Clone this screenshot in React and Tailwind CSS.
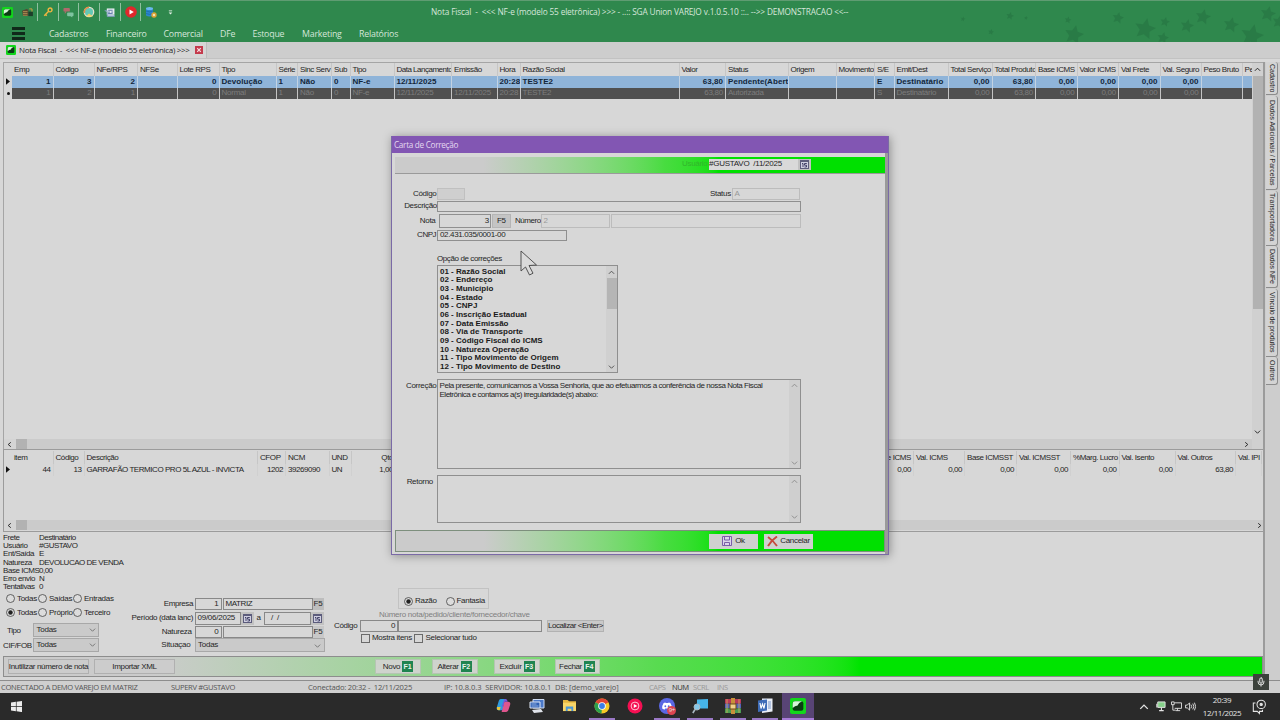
import clsx from "clsx";
import { Mic } from "lucide-react";

const menu = [
  { label: "Cadastros", width: "w-[57px]" },
  { label: "Financeiro", width: "w-[57.500px]" },
  { label: "Comercial", width: "w-[56.500px]" },
  { label: "DFe", width: "w-[32.5px]" },
  { label: "Estoque", width: "w-[49.5px]" },
  { label: "Marketing", width: "w-[57px]" },
  { label: "Relatórios", width: "w-[57px]" },
];

const notas = [
  { title: "Emp", w: "w-[41.5px]", a: "1", b: "1", right: true },
  { title: "Código", w: "w-[41px]", a: "3", b: "2", right: true },
  { title: "NFe/RPS", w: "w-[43.5px]", a: "2", b: "1", right: true },
  { title: "NFSe", w: "w-[39.5px]", a: "", b: "" },
  { title: "Lote RPS", w: "w-[42px]", a: "0", b: "0", right: true },
  { title: "Tipo", w: "w-[57px]", a: "Devolução", b: "Normal" },
  { title: "Série", w: "w-[21.5px]", a: "1", b: "1" },
  { title: "Sinc Serv", w: "w-[34px]", a: "Não", b: "Não" },
  { title: "Sub", w: "w-[18.5px]", a: "0", b: "0" },
  { title: "Tipo", w: "w-[44px]", a: "NF-e", b: "NF-e" },
  { title: "Data Lançamento", w: "w-[57.5px]", a: "12/11/2025", b: "12/11/2025", wide: true },
  { title: "Emissão", w: "w-[45.5px]", a: "", b: "12/11/2025" },
  { title: "Hora", w: "w-[23px]", a: "20:28", b: "20:28" },
  { title: "Razão Social", w: "w-[159px]", a: "TESTE2", b: "TESTE2" },
  { title: "Valor", w: "w-[46.5px]", a: "63,80", b: "63,80", right: true },
  { title: "Status", w: "w-[62.5px]", a: "Pendente(Aberto)", b: "Autorizada" },
  { title: "Origem", w: "w-[48px]", a: "", b: "" },
  { title: "Movimento", w: "w-[38.5px]", a: "", b: "" },
  { title: "S/E", w: "w-[19.5px]", a: "E", b: "S" },
  { title: "Emit/Dest", w: "w-[54px]", a: "Destinatário", b: "Destinatário" },
  { title: "Total Serviço", w: "w-[44px]", a: "0,00", b: "0,00", right: true },
  { title: "Total Produto", w: "w-[43.5px]", a: "63,80", b: "63,80", right: true },
  { title: "Base ICMS", w: "w-[41.5px]", a: "0,00", b: "0,00", right: true },
  { title: "Valor ICMS", w: "w-[41.5px]", a: "0,00", b: "0,00", right: true },
  { title: "Val Frete", w: "w-[41.5px]", a: "0,00", b: "0,00", right: true },
  { title: "Val. Seguro", w: "w-[41px]", a: "0,00", b: "0,00", right: true },
  { title: "Peso Bruto", w: "w-[41px]", a: "", b: "" },
  { title: "Pe", w: "w-[11.5px]", a: "", b: "" },
];

const itens = [
  { title: "item", w: "w-[41.5px]", a: "44", right: true },
  { title: "Código", w: "w-[31px]", a: "13", right: true },
  { title: "Descrição", w: "w-[173.5px]", a: "GARRAFÃO TERMICO PRO 5L AZUL - INVICTA" },
  { title: "CFOP", w: "w-[28px]", a: "1202", right: true },
  { title: "NCM", w: "w-[43.5px]", a: "39269090" },
  { title: "UND", w: "w-[22.5px]", a: "UN" },
  { title: "Qtd", w: "w-[44px]", a: "1,00", right: true, titleRight: true },
  { title: "", w: "w-[468px]", a: "" },
  { title: "Base ICMS", w: "w-[50px]", a: "0,00", right: true, titleRight: true },
  { title: "Val. ICMS", w: "w-[51px]", a: "0,00", right: true },
  { title: "Base ICMSST", w: "w-[52px]", a: "0,00", right: true },
  { title: "Val. ICMSST", w: "w-[54px]", a: "0,00", right: true },
  { title: "%Marg. Lucro", w: "w-[48.5px]", a: "0,00", right: true },
  { title: "Val. Isento", w: "w-[56px]", a: "0,00", right: true },
  { title: "Val. Outros", w: "w-[60.5px]", a: "63,80", right: true },
  { title: "Val. IPI", w: "w-[26px]", a: "" },
];

const sideTabs = [
  { label: "Cadastro", h: "h-[33px]", track: "tracking-[0px]" },
  { label: "Dados Adicionais / Parcelas", h: "h-[94.500px]", track: "tracking-[-0.05px]" },
  { label: "Transportadora", h: "h-[55px]", track: "tracking-[0.05px]" },
  { label: "Dados NFe", h: "h-[42px]", track: "tracking-[-0.05px]" },
  { label: "Vínculo de produtos", h: "h-[68px]", track: "tracking-[-0.1px]" },
  { label: "Outros", h: "h-[28px]", track: "tracking-[-0.05px]" },
];

const infos = [
  ["Frete", "Destinatário"],
  ["Usuário", "#GUSTAVO"],
  ["Ent/Saída", "E"],
  ["Natureza", "DEVOLUCAO DE VENDA"],
  ["Base ICMS", "0,00"],
  ["Erro envio", "N"],
  ["Tentativas", "0"],
];

const correcoes = [
  "01 - Razão Social",
  "02 - Endereço",
  "03 - Município",
  "04 - Estado",
  "05 - CNPJ",
  "06 - Inscrição Estadual",
  "07 - Data Emissão",
  "08 - Via de Transporte",
  "09 - Código Fiscal do ICMS",
  "10 - Natureza Operação",
  "11 - Tipo Movimento de Origem",
  "12 - Tipo Movimento de Destino",
];

const stars = [
  [963, 18, 2.5], [1010, 15, 4], [1026, 17, 2], [991, 31, 3], [1068, 19, 3.5],
  [1074, 34, 10], [1118, 17, 6], [1145, 28, 11], [1165, 21, 5], [1163, 37, 6],
  [1187, 25, 7], [1203, 16, 8], [1231, 24, 8], [1252, 35, 12], [1268, 13, 8],
  [1279, 21, 7],
];

function starPoints(cx, cy, r) {
  return Array.from({ length: 10 }, (_, i) => {
    const radius = i % 2 ? r * 0.48 : r;
    const angle = (Math.PI / 5) * i - 1.35;
    return `${cx + radius * Math.cos(angle)},${cy + radius * Math.sin(angle)}`;
  }).join(" ");
}

function Chevron({ dir = "down", className }) {
  const d = {
    down: "M1 3l3 3 3-3",
    up: "M1 5.500l3-3 3 3",
    left: "M5.500 1.500l-3 2.500 3 2.500",
    right: "M2.500 1.500l3 2.500-3 2.500",
  }[dir];
  return (
    <svg viewBox="0 0 8 8" className={clsx("shrink-0", className)} fill="none" stroke="currentColor" strokeWidth="1.1">
      <path d={d} />
    </svg>
  );
}

function AppLogo({ className }) {
  return (
    <svg viewBox="0 0 12 12" className={clsx("shrink-0", className)}>
      <rect width="12" height="12" rx="1.500" fill="#12d61c" />
      <rect x="2" y="2.500" width="8" height="7" rx="1.500" fill="#0c3b14" />
      <path d="M2 7.500V4.200Q2 2.500 3.700 2.500H9Q6.500 3.500 5.500 5.800 4.300 5.500 2 7.500z" fill="#d6f5d8" />
    </svg>
  );
}

function Calendar() {
  return (
    <span className="flex w-[13px] shrink-0 items-center justify-center bg-[#c2c2c2]">
      <svg viewBox="0 0 9 9" className="size-[9px]">
        <rect x="0.500" y="0.500" width="8" height="8" fill="#cfcfe0" stroke="#5c5c7c" />
        <path d="M0.500 1.500h8" stroke="#5c5c7c" />
        <path d="M2 3.500h1v3.500M4.500 7h2V5.200h-2V3.500h2.300" fill="none" stroke="#33335c" strokeWidth="0.900" />
      </svg>
    </span>
  );
}

function Radio({ label, checked, className }) {
  return (
    <span className={clsx("flex shrink-0 items-center gap-[2px]", className)}>
      <svg viewBox="0 0 9 9" className="size-[9px] shrink-0">
        <circle cx="4.500" cy="4.500" r="4" fill="#dcdcdc" stroke="#444" strokeWidth="0.800" />
        {checked && <circle cx="4.500" cy="4.500" r="2.200" fill="#222" />}
      </svg>
      <span className="tracking-[-0.3px]">{label}</span>
    </span>
  );
}

function Check({ label, className }) {
  return (
    <span className={clsx("flex shrink-0 items-center gap-[2.5px]", className)}>
      <span className="size-[9px] shrink-0 border border-[#6a6a6a]" />
      <span className="tracking-[-0.3px]">{label}</span>
    </span>
  );
}

function Select({ value, className }) {
  return (
    <span className={clsx("flex h-[14px] items-center justify-between border border-[#a8a8a8] bg-[#cacaca] px-[2.5px] tracking-[-0.25px]", className)}>
      {value}
      <Chevron className="size-[7px] text-[#777]" />
    </span>
  );
}

function Field({ className, children }) {
  return (
    <span className={clsx("flex shrink-0 items-center overflow-hidden border px-[2px]", className)}>{children}</span>
  );
}

function GridHeader({ cols }) {
  return (
    <div className="flex h-[13px] shrink-0 pl-[8px] tracking-[-0.42px]">
      {cols.map((c, i) => (
        <div
          key={i}
          className={clsx(
            "flex shrink-0 items-center overflow-hidden border-r border-[#c6c6c6] pl-[2px]",
            c.w,
            c.titleRight && "justify-end pr-[2px]"
          )}
        >
          <span className={clsx(c.wide && "tracking-[-0.5px]")}>{c.title}</span>
        </div>
      ))}
    </div>
  );
}

function GridRow({ cols, field, mark, className, cell }) {
  return (
    <div className="flex h-[11.6px] shrink-0">
      <div className="flex w-[8px] shrink-0 items-center justify-center">
        {mark === "arrow" ? (
          <svg viewBox="0 0 5 8" className="h-[7px] w-[4px]"><path d="M0 0l5 4-5 4z" fill="#111" /></svg>
        ) : (
          <span className="size-[3px] rounded-full bg-[#111]" />
        )}
      </div>
      <div className={clsx("flex", className)}>
        {cols.map((c, i) => (
          <div
            key={i}
            className={clsx(
              "flex shrink-0 items-center overflow-hidden border-r px-[2px]",
              cell,
              c.w,
              c.right && "justify-end"
            )}
          >
            {c[field]}
          </div>
        ))}
      </div>
    </div>
  );
}

function HScroll({ className, arrow }) {
  return (
    <div className={clsx("flex h-[10px] shrink-0 items-center bg-[#cbcbcb]", className)}>
      <span className="flex h-full w-[11.500px] items-center justify-center bg-[#d4d4d4]">
        <Chevron dir="left" className="size-[7px]" />
      </span>
      <span className="h-full w-[11px] bg-[#b2b2b2]" />
      <Chevron dir="right" className={clsx("ml-auto size-[7px]", arrow)} />
    </div>
  );
}

function ToolButton({ children }) {
  return (
    <div className="flex h-[18px] w-[20.700px] shrink-0 items-center justify-center border-l border-[#8fbf9f]">
      {children}
    </div>
  );
}

function Toolbar() {
  return (
    <div className="flex w-[180px] items-center">
      <div className="flex w-[37px] shrink-0 items-center gap-[9px] pl-[2px]">
        <AppLogo className="size-[11px]" />
        <svg viewBox="0 0 12 10" className="h-[9px] w-[11px]">
          <path d="M0 3l5-2 2 1v7H1z" fill="#5a4630" />
          <path d="M1 4h5M1 6h5M1 8h5" stroke="#c8a85c" strokeWidth="0.800" />
          <rect x="7" y="4" width="5" height="5" fill="#1d3d2a" />
          <path d="M8 1h3v3" stroke="#d9a441" fill="none" />
        </svg>
      </div>
      <ToolButton>
        <svg viewBox="0 0 12 12" className="size-[10px]" fill="none" stroke="#f0b541" strokeWidth="1.700">
          <circle cx="8.500" cy="3.500" r="2.300" />
          <path d="M6.800 5.200L1.500 10.500M3 9l1.500 1.500" />
        </svg>
      </ToolButton>
      <ToolButton>
        <svg viewBox="0 0 12 12" className="size-[11px]">
          <rect x="0.500" y="1" width="7" height="4" rx="1" fill="#b06a6c" />
          <path d="M2 4.500v3l2-2.500z" fill="#b06a6c" />
          <rect x="4.500" y="6" width="7" height="4" rx="1" fill="#7fc3a0" />
          <path d="M8 9.500l2 2V9z" fill="#7fc3a0" />
        </svg>
      </ToolButton>
      <ToolButton>
        <svg viewBox="0 0 12 12" className="size-[12px]">
          <circle cx="6" cy="6" r="4.700" fill="#63c7b4" stroke="#e7e0c8" strokeWidth="1.300" />
          <path d="M1.500 7A4.700 4.700 0 0 1 6 1.200" stroke="#e58c45" strokeWidth="1.400" fill="none" />
          <path d="M3 10.500l3-3 4 3z" fill="#f1d262" />
        </svg>
      </ToolButton>
      <ToolButton>
        <svg viewBox="0 0 12 10" className="h-[9px] w-[11px]">
          <path d="M3 0.500h8.500v7H3z" fill="#e8edf2" />
          <path d="M0.500 3h3v6.500h8V8" fill="#b7c6dd" stroke="#7f98c0" strokeWidth="0.800" />
          <path d="M4.500 2.500h5M4.500 4.500h2M8 4.500h2M4.500 6h5" stroke="#3f5f97" strokeWidth="0.900" />
        </svg>
      </ToolButton>
      <ToolButton>
        <svg viewBox="0 0 12 12" className="size-[12px]">
          <circle cx="6" cy="6" r="5.800" fill="#e0272c" />
          <path d="M4.500 3.500L8.800 6 4.500 8.500z" fill="#fff" />
        </svg>
      </ToolButton>
      <ToolButton>
        <svg viewBox="0 0 12 12" className="size-[12px]">
          <path d="M1 2.500v7q3.500 2 7 0v-7z" fill="#2c86cf" />
          <ellipse cx="4.500" cy="2.500" rx="3.500" ry="1.500" fill="#6bb8ee" />
          <path d="M1 5q3.500 1.800 7 0M1 7.500q3.500 1.800 7 0" stroke="#15609c" strokeWidth="0.600" fill="none" />
          <circle cx="9" cy="9" r="2" fill="#f2e3b0" stroke="#dfa132" strokeWidth="1.400" />
        </svg>
      </ToolButton>
      <svg viewBox="0 0 6 6" className="ml-[6.500px] size-[5px] shrink-0">
        <path d="M1 1h4" stroke="#e8f2ea" />
        <path d="M0.800 3h4.400L3 5.300z" fill="#e8f2ea" />
      </svg>
    </div>
  );
}

function Header() {
  return (
    <header className="relative h-[42px] shrink-0 overflow-hidden border-t border-[#5f9c72] bg-[#2f884d] font-['Open_Sans',sans-serif] text-[#d5e6da]">
      <svg className="absolute inset-0 h-[42px] w-[1280px]" viewBox="0 0 1280 42">
        {stars.map(([x, y, r]) => (
          <polygon key={x} points={starPoints(x, y, r)} fill="#277643" opacity="0.700" />
        ))}
      </svg>
      <div className="relative flex h-[22px] items-center">
        <Toolbar />
        <div className="ml-[251px] text-[8.3px] tracking-[-0.16px] whitespace-pre">
          {"Nota Fiscal  -  <<< NF-e (modelo 55 eletrônica) >>> - ..:: SGA Union VAREJO v.1.0.5.10 ::.. -->> DEMONSTRACAO <<--"}
        </div>
      </div>
      <div className="relative flex h-[21px] items-center">
        <div className="ml-[12px] flex w-[37px] flex-col gap-[2.5px]">
          <span className="h-[2.5px] w-[12.5px] bg-[#10291a]" />
          <span className="h-[2.5px] w-[12.5px] bg-[#10291a]" />
          <span className="h-[2.5px] w-[12.5px] bg-[#10291a]" />
        </div>
        {menu.map((m) => (
          <div key={m.label} className={clsx("shrink-0 pt-px text-[8.8px] tracking-[-0.2px]", m.width)}>{m.label}</div>
        ))}
      </div>
    </header>
  );
}

function TabStrip() {
  return (
    <div className="h-[20px] shrink-0 bg-[#cdcdcd]">
      <div className="flex h-[16px] w-[207px] items-center border-r border-[#bdbdbd] bg-[#d6d6d6] pl-[6px] font-['Open_Sans',sans-serif] text-[8px] tracking-[-0.3px]">
        <AppLogo className="size-[10px]" />
        <span className="ml-[3px] w-[176px] whitespace-pre">{"Nota Fiscal  -  <<< NF-e (modelo 55 eletrônica) >>>"}</span>
        <svg viewBox="0 0 8 8" className="size-[8px] shrink-0">
          <rect width="8" height="8" fill="#c43a4c" />
          <path d="M2.200 2.200l3.600 3.600M5.800 2.200L2.200 5.800" stroke="#f5dfe2" strokeWidth="1.200" />
        </svg>
      </div>
      <div className="h-[4px] border-t border-[#c2c2c2] bg-[#d8d8d8]" />
    </div>
  );
}

function FilterPanel() {
  return (
    <section className="flex h-[124px] shrink-0 items-start">
      <div className="w-[124px] shrink-0 pt-[2px]">
        <div className="flex flex-col">
          {infos.map(([label, value]) => (
            <div key={label} className="flex h-[8.2px] items-center">
              <span className="w-[36px] shrink-0 tracking-[-0.45px]">{label}</span>
              <span className="tracking-[-0.5px]">{value}</span>
            </div>
          ))}
        </div>
        <div className="mt-[2.5px] flex h-[10px] pl-[3px]">
          <Radio label="Todas" className="w-[32px]" />
          <Radio label="Saídas" className="w-[35px]" />
          <Radio label="Entradas" />
        </div>
        <div className="mt-[4px] flex h-[10px] pl-[3px]">
          <Radio label="Todas" className="w-[32px]" checked />
          <Radio label="Próprio" className="w-[35px]" />
          <Radio label="Terceiro" />
        </div>
        <div className="mt-[5px] flex items-center">
          <span className="w-[30px] pt-[2px] pl-[4px]">Tipo</span>
          <Select value="Todas" className="w-[66px]" />
        </div>
        <div className="mt-[1px] flex items-center">
          <span className="w-[30px] pt-[2px] tracking-[-0.4px]">CIF/FOB</span>
          <Select value="Todas" className="w-[66px]" />
        </div>
      </div>

      <div className="flex w-[200px] shrink-0 flex-col pt-[66px] tracking-[-0.25px]">
        <div className="flex h-[12px] items-stretch">
          <span className="flex w-[67.500px] items-center justify-end pr-[1.5px] tracking-[-0.4px]">Empresa</span>
          <Field className="w-[27px] justify-end border-[#888]">1</Field>
          <Field className="ml-px w-[90px] border-[#888] tracking-[-0.4px]">MATRIZ</Field>
          <span className="flex w-[11px] items-center justify-center bg-[#bdbdbd]">F5</span>
        </div>
        <div className="mt-[1.500px] flex h-[13px] items-stretch">
          <span className="flex w-[67.500px] items-center justify-end pr-[1.5px] tracking-[-0.35px]">Período (data lanc)</span>
          <Field className="w-[46px] border-[#888]">09/06/2025</Field>
          <Calendar />
          <span className="flex w-[10px] items-center justify-center">a</span>
          <Field className="w-[47px] border-[#888]">
            <span className="pl-[2.5px] whitespace-pre">{" /  /"}</span>
          </Field>
          <Calendar />
        </div>
        <div className="mt-[1px] flex h-[12px] items-stretch">
          <span className="flex w-[67.500px] items-center justify-end pr-[3px] tracking-[-0.35px]">Natureza</span>
          <Field className="w-[27px] justify-end border-[#888]">0</Field>
          <Field className="ml-px w-[90px] border-[#888]" />
          <span className="flex w-[11px] items-center justify-center bg-[#c8c8c8]">F5</span>
        </div>
        <div className="mt-[0.5px] flex items-center">
          <span className="w-[67.500px] shrink-0 pr-[4px] text-right">Situaçao</span>
          <Select value="Todas" className="w-[130px]" />
        </div>
      </div>

      <div className="flex flex-col pt-[56px]">
        <div className="ml-[71px] flex h-[21px] w-[91px] items-end border border-[#c2c2c2] pb-[2px] pl-[5px]">
          <Radio label="Razão" className="w-[41.500px]" checked />
          <Radio label="Fantasia" />
        </div>
        <div className="ml-[52px] h-[11px] pt-px text-[#808080]">
          <span className="tracking-[-0.26px]">Número nota/pedido/cliente/fornecedor/chave</span>
        </div>
        <div className="flex h-[12px] items-stretch">
          <span className="flex w-[33px] items-center pl-[7px] tracking-[-0.35px]">Código</span>
          <Field className="w-[38px] justify-end border-[#888]">0</Field>
          <Field className="w-[144px] border-[#888]" />
          <span className="ml-[5px] flex w-[57px] items-center justify-center border border-[#b2b2b2] bg-[#c9c9c9]">
            Localizar &lt;Enter&gt;
          </span>
        </div>
        <div className="mt-[1px] flex pl-[33.500px]">
          <Check label="Mostra itens" className="w-[53.500px]" />
          <Check label="Selecionar tudo" />
        </div>
      </div>
    </section>
  );
}

function ActionBar() {
  const actions = [
    { label: "Novo", key: "F1", w: "w-[46px]" },
    { label: "Alterar", key: "F2", w: "w-[46px]" },
    { label: "Excluír", key: "F3", w: "w-[46px]" },
    { label: "Fechar", key: "F4", w: "w-[45px]" },
  ];
  return (
    <div className="flex h-[21px] shrink-0 items-center border border-[#8d8d8d] bg-linear-to-r from-[#cbcbcb] from-12% via-[#58db50] via-52% to-[#00e400] to-68% pl-[4px] tracking-[-0.35px]">
      <span className="flex h-[15px] w-[81px] items-center justify-center border border-[#b0b0b0] bg-[#cccccc]">Inutilizar número de nota</span>
      <span className="ml-[5px] flex h-[15px] w-[81px] items-center justify-center border border-[#b0b0b0] bg-[#cccccc]">Importar XML</span>
      <div className="ml-[200px] flex gap-[10.500px]">
        {actions.map((a, i) => (
          <span
            key={a.key}
            className={clsx("flex h-[15px] items-center justify-center gap-[2px] border border-[#b5c5b3] bg-[#cfd3cd]", a.w, i === 2 && "ml-[6px]", i === 3 && "ml-[4px]")}
          >
            {a.label}
            <b className="flex h-[11px] w-[11px] items-center justify-center bg-[#1f8450] text-[7px] tracking-[0px] text-[#e8f3ec]">{a.key}</b>
          </span>
        ))}
      </div>
    </div>
  );
}

function StatusBar() {
  return (
    <div className="flex h-[13px] shrink-0 items-center border-t border-[#8d8d8d] bg-[#cfcfcf] pl-px font-['Open_Sans',sans-serif] text-[7.6px] text-[#555] whitespace-pre">
      <span className="w-[170px] tracking-[-0.32px]">CONECTADO A DEMO VAREJO EM MATRIZ</span>
      <span className="w-[137px] tracking-[-0.35px]">SUPERV #GUSTAVO</span>
      <span className="w-[136px] tracking-[-0.2px]">{"Conectado: 20:32 -  12/11/2025"}</span>
      <span className="w-[205px] tracking-[-0.08px]">IP: 10.8.0.3  SERVIDOR: 10.8.0.1  DB: [demo_varejo]</span>
      <span className="w-[23px] text-[#999]">CAPS</span>
      <span className="w-[21px] text-[#333]">NUM</span>
      <span className="w-[24px] text-[#999]">SCRL</span>
      <span className="text-[#999]">INS</span>
    </div>
  );
}

function TaskItem({ open, active, children }) {
  return (
    <div className={clsx("flex h-full w-[32.7px] flex-col items-center", active && "bg-[#584475]")}>
      <div className="flex flex-1 items-center justify-center">{children}</div>
      <span className={clsx("h-[2px]", active ? "w-full bg-[#a77bd8]" : "w-[26px]", open && "bg-[#9a78c6]")} />
    </div>
  );
}

function Taskbar() {
  return (
    <footer className="flex h-[27px] shrink-0 items-center bg-[#2a2a2a] font-['Open_Sans',sans-serif] text-[#e4e4e4]">
      <svg viewBox="0 0 11 11" className="ml-[10.5px] size-[11px]" fill="#ececec">
        <path d="M0 1.500l4.900-.7v4.400H0zM5.600.7L11 0v5.200H5.600zM0 5.900h4.900v4.400L0 9.600zM5.600 5.900H11v5.200l-5.400-.8z" />
      </svg>
      <div className="ml-[466px] flex h-full">
        <TaskItem>
          <svg viewBox="0 0 16 16" className="size-[15px]">
            <path d="M5 1h5l-3 12H3Q0 13 1 9.500L3 3Q3.500 1 5 1z" fill="#2f9be0" />
            <path d="M3 13q-2.500 0-2-3.500h4L6.500 4 4 13z" fill="#e6c53e" />
            <path d="M11 15H6L9 4h4q3 0 2 3.500L13.500 12Q13 15 11 15z" fill="#e0568e" />
            <path d="M9 1h1.500Q12 1 12.500 4H9L7.500 9H6z" fill="#7a55d8" />
          </svg>
        </TaskItem>
        <TaskItem>
          <svg viewBox="0 0 16 16" className="size-[16px]">
            <path d="M4 1.500h11v8.500H4z" fill="#4a78c8" stroke="#cfdcf2" />
            <path d="M1 4h10v6H1z" fill="#2e5fb4" stroke="#dfe7f5" />
            <path d="M2.500 6h5M2.500 8h7" stroke="#a9c2ea" strokeWidth="0.800" />
            <path d="M3 12l9-1 2 3-9 1z" fill="#dfe3ea" />
          </svg>
        </TaskItem>
        <TaskItem>
          <svg viewBox="0 0 16 14" className="h-[13px] w-[15px]">
            <path d="M1 1h5l1.500 1.500H15V13H1z" fill="#e6b740" />
            <path d="M1 4h14v9H1z" fill="#f8d568" />
            <path d="M4 13V8h8v5h-2v-2.500H6V13z" fill="#4a97d6" />
          </svg>
        </TaskItem>
        <TaskItem open>
          <svg viewBox="0 0 16 16" className="size-[16px]">
            <circle cx="8" cy="8" r="7.500" fill="#f6c927" />
            <path d="M8 8L1.500 4.200A7.500 7.500 0 0 1 14.500 4.200z" fill="#e24436" />
            <path d="M8 8L1.500 4.200A7.500 7.500 0 0 0 7.500 15.500z" fill="#2da04e" />
            <circle cx="8" cy="8" r="3.800" fill="#fff" />
            <circle cx="8" cy="8" r="2.900" fill="#3b7de8" />
          </svg>
        </TaskItem>
        <TaskItem>
          <svg viewBox="0 0 16 16" className="size-[16px]">
            <circle cx="8" cy="8" r="7.500" fill="#f50f52" />
            <circle cx="8" cy="8" r="3.900" fill="none" stroke="#ffd5e0" strokeWidth="0.900" />
            <path d="M6.800 6l3.500 2-3.500 2z" fill="#fff" />
          </svg>
        </TaskItem>
        <TaskItem open>
          <span className="relative flex size-[16px] items-center justify-center rounded-full bg-[#5a67e4]">
            <svg viewBox="0 0 12 9" className="h-[8px] w-[10px]" fill="#fff">
              <path d="M2 1l2-.8.5.8h3L8 .2l2 .8q2 3 1.800 6.500L9 9l-.8-1.500H3.800L3 9 .2 7.500Q0 4 2 1z" />
              <circle cx="4" cy="4.800" r="1.100" fill="#5a67e4" />
              <circle cx="8" cy="4.800" r="1.100" fill="#5a67e4" />
            </svg>
            <span className="absolute -right-[1px] -bottom-[1px] flex h-[9px] w-[9px] items-center justify-center rounded-full bg-[#dd4550] text-[6px]">9+</span>
          </span>
        </TaskItem>
        <TaskItem open>
          <svg viewBox="0 0 16 16" className="size-[16px]">
            <path d="M5 1.500L16 1v9.500H5z" fill="#46b5ea" />
            <circle cx="5" cy="9" r="3" fill="#86c9ea" stroke="#a9b9c2" />
            <path d="M3 11.500L.8 15" stroke="#a9b9c2" strokeWidth="1.600" />
          </svg>
        </TaskItem>
        <TaskItem open>
          <svg viewBox="0 0 16 16" className="size-[16px]">
            <path d="M0 1h16v4.700H0z" fill="#b93a58" />
            <path d="M0 5.700h16v4.600H0z" fill="#5563b9" />
            <path d="M0 10.300h16V15H0z" fill="#4b9a51" />
            <path d="M6 0h4v16H6z" fill="#c9903a" />
            <rect x="5" y="6" width="6" height="5" fill="#f0d28a" stroke="#70491a" />
            <path d="M2 1v14M14 1v14" stroke="#d8b15c" strokeWidth="0.800" />
          </svg>
        </TaskItem>
        <TaskItem open>
          <svg viewBox="0 0 16 16" className="size-[16px]">
            <path d="M5 .5h10.500v13L5 15z" fill="#e9eef7" />
            <path d="M1 2.500L10 1.500v11L1 14z" fill="#3f6db8" />
            <path d="M3 5l1 5.500L5.500 6 7 10.500 8 5" fill="none" stroke="#fff" strokeWidth="1.100" />
            <path d="M11 4h3M11 6h3M11 8h3M11 10h3" stroke="#5c7fbd" strokeWidth="0.800" />
          </svg>
        </TaskItem>
        <TaskItem active>
          <AppLogo className="size-[16px]" />
        </TaskItem>
      </div>
      <div className="ml-auto flex h-full items-center pr-[14px]">
        <Chevron dir="up" className="size-[10px]" />
        <svg viewBox="0 0 12 12" className="ml-[6px] size-[11px]">
          <path d="M3 1h8v6H3z" fill="#86d18b" stroke="#e4e4e4" />
          <path d="M7 7v3M4.500 10.500h5M2 3v4" stroke="#e4e4e4" strokeWidth="1.200" />
        </svg>
        <svg viewBox="0 0 12 12" className="ml-[5px] size-[11px]" fill="none" stroke="#e4e4e4">
          <path d="M4 2h7.500v6H4M7 8v2.500M5 10.500h5M.5 1h3v3h-3zM2 4v6h3" />
        </svg>
        <svg viewBox="0 0 12 12" className="ml-[3px] size-[11px]" fill="none" stroke="#e4e4e4">
          <path d="M.5 4.500h2L5 2v8L2.500 7.500h-2zM6.500 4q1.500 2 0 4M8.500 2.800q2.200 3.200 0 6.400M10.300 1.800q2.700 4.200 0 8.400" />
        </svg>
        <div className="ml-[5px] flex w-[42px] flex-col items-center text-[8px] leading-[12.500px]">
          <span className="tracking-[-0.42px]">20:39</span>
          <span className="tracking-[-0.42px]">12/11/2025</span>
        </div>
        <svg viewBox="0 0 16 18" className="ml-[9px] h-[16px] w-[14px]" fill="none" stroke="#e4e4e4" strokeWidth="1.200">
          <path d="M4 4.500H1.500V14H6l2.500 2.500V14H12v-2" />
          <circle cx="10.500" cy="6" r="4.800" />
          <circle cx="10.500" cy="6" r="1.300" fill="#e4e4e4" />
        </svg>
      </div>
    </footer>
  );
}

function MemoBox({ className, children }) {
  return (
    <div className={clsx("flex w-[364px] shrink-0 border border-[#8f8f8f]", className)}>
      <div className="flex-1 pl-[1.5px] leading-[8.7px]">{children}</div>
      <div className="flex w-[11px] flex-col items-center justify-between bg-[#cfcfcf] py-[2px] text-[#8f8f8f]">
        <Chevron dir="up" className="size-[7px]" />
        <Chevron className="size-[7px]" />
      </div>
    </div>
  );
}

function CorrectionDialog() {
  return (
    <div className="absolute top-[136px] left-[391px] flex h-[419px] w-[498px] flex-col border-x border-b border-[#7a6aa6] bg-[#d7d7d7] tracking-[-0.3px] shadow-[1px_1px_9px_rgba(0,0,0,0.35)]">
      <div className="flex h-[17px] shrink-0 items-center bg-[#8256b3] pl-[2px] font-['Open_Sans',sans-serif] text-[8.2px] text-[#e4d8f0]">
        Carta de Correção
      </div>
      <div className="flex flex-1 flex-col border-r-[3px] border-[#9a9a9a] pl-[3px]">
        <div className="mt-[4px] flex h-[17px] shrink-0 items-start justify-end border-b border-[#9a9a9a] bg-linear-to-r from-[#cbcbcb] from-18% via-[#48dc40] via-55% to-[#00e000] to-66% pt-[1.500px] pr-[74px]">
          <span className="w-[27px] text-[#33b52c]">Usuário</span>
          <span className="flex h-[11.5px] w-[89px] items-center bg-[#d9d9d9] tracking-[-0.25px] whitespace-pre">{"#GUSTAVO  /11/2025"}</span>
          <span className="flex h-[11.5px]"><Calendar /></span>
        </div>

        <div className="mt-[14px] flex h-[11.5px] items-stretch">
          <span className="flex w-[42px] items-center justify-end pr-[0.5px]">Código</span>
          <Field className="w-[28px] border-[#c0c0c0] bg-[#cfcfcf]" />
          <span className="ml-[245px] flex w-[21.500px] items-center">Status</span>
          <Field className="w-[68px] border-[#bcbcbc] text-[#999]">A</Field>
        </div>
        <div className="mt-px flex h-[11.5px] items-stretch">
          <span className="flex w-[42px] items-center justify-end">Descrição</span>
          <Field className="w-[364px] border-[#8f8f8f]" />
        </div>
        <div className="mt-[2px] flex h-[14px] items-stretch">
          <span className="flex w-[43.500px] items-center justify-end pr-[3px]">Nota</span>
          <Field className="w-[52.500px] justify-end border-[#8f8f8f] pr-[1px]">3</Field>
          <span className="ml-[0.5px] flex w-[19.500px] items-center justify-center border border-[#b5b5b5] bg-[#c4c4c4]">F5</span>
          <span className="flex w-[29.500px] items-center pl-[4px] tracking-[-0.45px]">Número</span>
          <Field className="w-[69px] border-[#bcbcbc] text-[#999]">2</Field>
          <Field className="ml-px w-[190px] border-[#bcbcbc]" />
        </div>
        <div className="mt-[1.5px] flex h-[11.5px] items-stretch">
          <span className="flex w-[42px] items-center justify-end pr-px tracking-[-0.5px]">CNPJ</span>
          <Field className="w-[130px] border-[#8f8f8f] px-[1px]">
            <span className="tracking-[-0.35px]">02.431.035/0001-00</span>
          </Field>
        </div>

        <div className="mt-[12.500px] ml-[42px] h-[11.500px] tracking-[-0.4px]">Opção de correções</div>
        <div className="ml-[42px] flex h-[108px] w-[181px] shrink-0 border border-[#8f8f8f]">
          <div className="flex flex-1 flex-col pt-[1.500px] pl-[2px] font-bold tracking-[0px] text-[#1a1a1a]">
            {correcoes.map((c) => (
              <span key={c} className="flex h-[8.65px] items-center">{c}</span>
            ))}
          </div>
          <div className="flex w-[11px] flex-col items-center bg-[#d0d0d0] py-[2.5px] text-[#555]">
            <Chevron dir="up" className="size-[7px]" />
            <span className="mt-[2px] h-[31px] w-[10px] bg-[#b5b5b5]" />
            <Chevron className="mt-auto size-[7px]" />
          </div>
        </div>

        <div className="mt-[6px] flex items-start">
          <span className="w-[42px] pt-[2px] pr-[0.5px] text-right">Correção</span>
          <MemoBox className="h-[90px]">
            <p className="pt-[2px]">
              <span className="tracking-[-0.45px]">Pela presente, comunicamos a Vossa Senhoria, que ao efetuarmos a conferência de nossa Nota Fiscal</span>
              <br />
              <span className="tracking-[-0.49px]">Eletrônica e contamos a(s) irregularidade(s) abaixo:</span>
            </p>
          </MemoBox>
        </div>
        <div className="mt-[6px] flex items-start">
          <span className="w-[42px] pt-[2px] pr-[4px] text-right">Retorno</span>
          <MemoBox className="h-[48px]" />
        </div>

        <div className="mt-auto mb-[2px] flex h-[22px] shrink-0 items-center border border-[#7d8f7d] bg-linear-to-r from-[#cbcbcb] from-18% via-[#48dc40] via-55% to-[#00e000] to-66% pl-[313px]">
          <span className="flex h-[15px] w-[49px] items-center justify-center gap-[3px] bg-[#d0d0d0]">
            <svg viewBox="0 0 10 10" className="size-[10px]">
              <path d="M.5.5h9v9h-9z" fill="#dcd3ea" stroke="#7b5ea8" />
              <path d="M2.500.5v3.500h5V.5M2.500 9.500V6.500h5v3" fill="none" stroke="#7b5ea8" />
            </svg>
            Ok
          </span>
          <span className="ml-[6px] flex h-[15px] w-[49px] items-center justify-center gap-[2px] bg-[#d0d0d0]">
            <svg viewBox="0 0 11 11" className="size-[11px]" fill="none" stroke="#c64a3c" strokeWidth="1.900">
              <path d="M1 1q5 3.500 9 9M10 .5Q4 4.500 1 10" />
            </svg>
            Cancelar
          </span>
        </div>
      </div>
    </div>
  );
}

export default function App() {
  return (
    <div className="relative flex h-[720px] w-[1280px] flex-col overflow-hidden bg-[#d7d7d7] font-['Liberation_Sans',sans-serif] text-[8px] leading-[10px] tracking-[-0.45px] whitespace-nowrap text-[#262626]">
      <Header />
      <TabStrip />
      <div className="flex h-[618px] shrink-0">
        <div className="flex w-[1265px] flex-col border-r-[2px] border-[#9b9b9b] pl-[3px]">
          <div className="flex h-[387px] shrink-0 border-t border-l border-[#a5a5a5]">
            <div className="flex w-[1249px] flex-col overflow-hidden">
              <GridHeader cols={notas} />
              <GridRow cols={notas} field="a" mark="arrow" className="bg-[#8fb4d9] font-bold tracking-[0.05px] text-[#12263a]" cell="border-[#c3d3e3]" />
              <GridRow cols={notas} field="b" mark="dot" className="bg-[#505050] tracking-[-0.25px] text-[#7d7d7d]" cell="border-[#c4c4c4]" />
              <HScroll className="mt-auto" arrow="mr-[2px]" />
            </div>
            <div className="flex w-[11px] flex-col items-center bg-[#d0d0d0]">
              <Chevron dir="up" className="mt-[3px] size-[7px]" />
              <span className="mt-[3px] h-[233px] w-[10px] bg-[#b2b2b2]" />
              <Chevron className="mt-auto mb-[14px] size-[7px]" />
            </div>
          </div>
          <div className="flex h-[83px] shrink-0 flex-col border-y border-l border-[#9b9b9b]">
            <div className="flex flex-1 flex-col overflow-hidden pt-[1px]">
              <GridHeader cols={itens} />
              <GridRow cols={itens} field="a" mark="arrow" cell="border-[#d0d0d0]" />
            </div>
            <HScroll className="mb-[1px]" />
          </div>
          <FilterPanel />
          <ActionBar />
        </div>
        <aside className="flex w-[15px] flex-col bg-[#cdcdcd] pl-px">
          {sideTabs.map((t) => (
            <div key={t.label} className={clsx("mb-[0.5px] flex w-[12px] items-center justify-center rounded-r-[3px] border-r border-b border-[#8c8c8c] bg-[#d3d3d3] text-[7px] [writing-mode:vertical-rl]", t.h, t.track)}>
              {t.label}
            </div>
          ))}
        </aside>
      </div>
      <StatusBar />
      <Taskbar />

      <CorrectionDialog />
      <svg viewBox="0 0 18 26" className="absolute top-[250px] left-[520px] h-[26px] w-[18px]">
        <path d="M1 1v20l4.500-4 4 8 3.500-1.800-4-7.700 7.500-.5z" fill="#dadada" stroke="#444" strokeWidth="0.900" />
      </svg>
      <span className="absolute top-[674px] left-[1253px] flex h-[16px] w-[16px] items-center justify-center bg-[#3c423c]">
        <Mic className="size-[10px] text-white" />
      </span>
    </div>
  );
}
